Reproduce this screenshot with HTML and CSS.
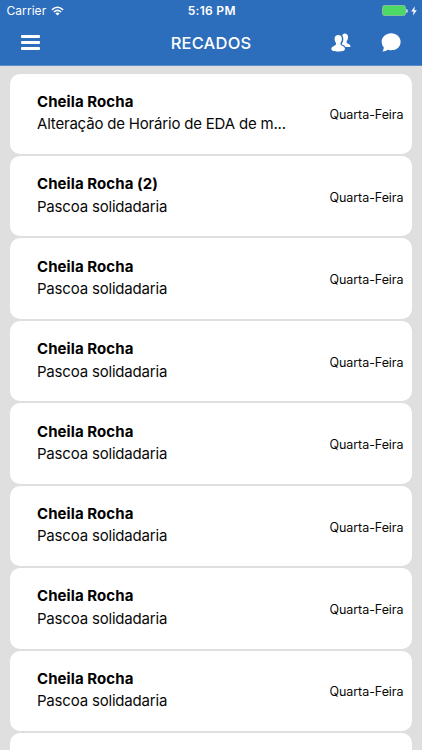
FILE: index.html
```html
<!DOCTYPE html>
<html lang="pt">
<head>
<meta charset="utf-8">
<meta name="viewport" content="width=device-width, initial-scale=1">
<title>Recados</title>
<link rel="stylesheet" href="styles.css">
</head>
<body>
<div class="app">
  <header class="header">
    <div class="status">
      <div class="carrier"><span class="carrier-name">Carrier</span>
        <svg class="wifi" viewBox="0 0 13 10"><g fill="none" stroke="#fff" stroke-width="1.6"><path d="M.9 3.8Q6.5-1.3 12.1 3.8"/><path d="M2.9 6Q6.5 2.8 10.1 6"/></g><path fill="#fff" d="M4.4 7.4Q6.5 5.8 8.6 7.4L6.5 9.5z"/></svg>
      </div>
      <span class="time">5:16 PM</span>
      <div class="power">
        <span class="battery"></span><span class="battery-tip"></span>
        <svg class="bolt" viewBox="0 0 6 10"><path fill="#fff" d="M3.8.2L.2 5.4H2.6L1.9 9.6L5.8 4.2H3.4z"/></svg>
      </div>
    </div>
    <nav class="bar">
      <div class="menu"><i></i><i></i><i></i></div>
      <h1 class="title">RECADOS</h1>
      <div class="actions">
        <svg class="people" viewBox="0 0 20 19"><path fill="#fff" d="M11.2 2.2C12 .8 13 .3 14 .4C16.4.6 17.4 2.5 17 5C16.8 6.5 16 7.5 15.6 8.5C15.4 9.7 16 10.3 17.3 10.8C18.8 11.4 19.4 12.3 19.5 14H14.6C13.8 12.8 12.4 12.2 11.3 11.8C10.8 11.4 10.8 10.7 11.2 10C12.5 8.5 12.9 4.5 11.2 2.2z"/><path fill="#fff" d="M7.3 2C9.6 2 11.1 3.6 10.9 6.2C10.8 8 10 9.1 9.5 10C9.2 11.4 9.9 12.2 11.2 12.7C13.3 13.5 14 14.5 14 16.3C13.7 18 10.7 18.5 7.1 18.5S.5 18 .3 16.3C.3 14.5 1.2 13.5 3.3 12.7C4.6 12.2 5.3 11.4 5 10C4.4 9.1 3.6 8 3.6 6.2C3.4 3.6 5 2 7.3 2z"/></svg>
        <svg class="bubble" viewBox="0 0 20 19"><path fill="#fff" d="M10.2.2C15.5.2 19.6 3.8 19.6 8.8S15.5 17.3 10.2 17.3Q8.5 17.3 7 16.8Q4.5 18.6 1.3 18.5Q2.7 16.8 2.8 14.4Q.6 12 .6 8.8C.6 3.8 4.9.2 10.2.2z"/></svg>
      </div>
    </nav>
  </header>
  <main class="list">
    <article class="card"><div class="message"><h2 class="name">Cheila Rocha</h2><p class="subject">Alteração de Horário de EDA de m...</p></div><time class="day">Quarta-Feira</time></article>
    <article class="card"><div class="message"><h2 class="name">Cheila Rocha (2)</h2><p class="subject">Pascoa solidadaria</p></div><time class="day">Quarta-Feira</time></article>
    <article class="card"><div class="message"><h2 class="name">Cheila Rocha</h2><p class="subject">Pascoa solidadaria</p></div><time class="day">Quarta-Feira</time></article>
    <article class="card"><div class="message"><h2 class="name">Cheila Rocha</h2><p class="subject">Pascoa solidadaria</p></div><time class="day">Quarta-Feira</time></article>
    <article class="card"><div class="message"><h2 class="name">Cheila Rocha</h2><p class="subject">Pascoa solidadaria</p></div><time class="day">Quarta-Feira</time></article>
    <article class="card"><div class="message"><h2 class="name">Cheila Rocha</h2><p class="subject">Pascoa solidadaria</p></div><time class="day">Quarta-Feira</time></article>
    <article class="card"><div class="message"><h2 class="name">Cheila Rocha</h2><p class="subject">Pascoa solidadaria</p></div><time class="day">Quarta-Feira</time></article>
    <article class="card"><div class="message"><h2 class="name">Cheila Rocha</h2><p class="subject">Pascoa solidadaria</p></div><time class="day">Quarta-Feira</time></article>
    <article class="card"></article>
  </main>
</div>
</body>
</html>
```

FILE: styles.css
```css
* { box-sizing: border-box; }
body, h1, h2, p { margin: 0; }
body { font-family: Inter, "Liberation Sans", sans-serif; color: #080808; }
.app { height: 750px; overflow: hidden; background: #dfdfdf; display: flex; flex-direction: column; }
.header { flex: none; height: 66px; background: #2c6dbc; border-bottom: 1px solid #5b8cc9; color: #fff; }
.status { height: 21px; padding: 0 5px 0 6.5px; display: grid; grid-template-columns: 1fr auto 1fr; align-items: center; }
.carrier { display: flex; align-items: center; gap: 5px; font-size: 12px; line-height: 21px; }
.carrier-name { letter-spacing: .06px; }
.wifi { width: 13px; height: 10px; }
.time { font-size: 12px; font-weight: 600; letter-spacing: .3px; }
.power { display: flex; align-items: center; justify-content: flex-end; }
.battery { width: 24px; height: 11px; border-radius: 2.5px; background: #4cd964; border: 1px solid #83bd9c; }
.battery-tip { width: 2px; height: 4px; border-radius: 0 2px 2px 0; background: #b8d1df; }
.bolt { width: 6px; height: 10px; margin-left: 3px; }
.bar { height: 42px; padding: 0 21px; display: grid; grid-template-columns: 1fr auto 1fr; align-items: center; }
.menu { width: 19px; display: flex; flex-direction: column; gap: 3px; }
.menu i { height: 3px; border-radius: 1px; background: #fff; }
.title { font-size: 16.5px; font-weight: 500; line-height: 20px; letter-spacing: .2px; padding-top: 2px; }
.actions { display: flex; justify-content: flex-end; gap: 30px; }
.people, .bubble { width: 20px; height: 19px; }
.list { padding: 7.6px 10.3px 0; display: flex; flex-direction: column; gap: 2px; }
.card { flex: none; height: 80.45px; padding: 0 8.3px 0 26.7px; border-radius: 10px; background: #fff; display: flex; justify-content: space-between; }
.message { padding-top: 17.2px; white-space: nowrap; }
.name { font-size: 15px; font-weight: 700; line-height: 22.5px; letter-spacing: .08px; color: #000; }
.subject { font-size: 15px; line-height: 22.5px; letter-spacing: -.19px; }
.day { font-size: 12.5px; line-height: 16px; letter-spacing: -.07px; padding-top: 33.8px; white-space: nowrap; }
```
